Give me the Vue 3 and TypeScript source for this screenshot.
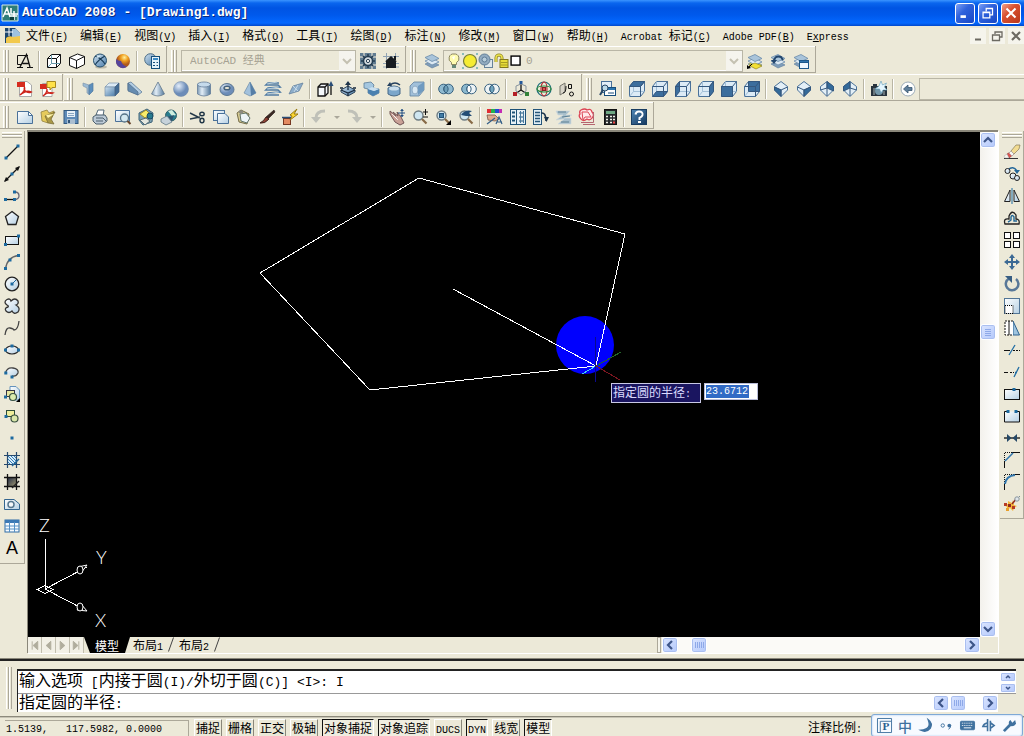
<script setup lang="ts">
import { h, ref } from 'vue'

type Item = { kind: 'icon' | 'sep' | 'drop' | 'workspace' | 'layer' | 'well'; id: string; label: string }

const path = (d: string, fill = 'none', stroke = 'none', w = 1) =>
  `<path d="${d}" fill="${fill}" stroke="${stroke}" stroke-width="${w}"/>`
const line = (d: string, stroke = '#000', w = 1) => path(d, 'none', stroke, w)
const circle = (x: number, y: number, r: number, fill = 'none', stroke = 'none', w = 1) =>
  `<circle cx="${x}" cy="${y}" r="${r}" fill="${fill}" stroke="${stroke}" stroke-width="${w}"/>`
const ellipse = (x: number, y: number, a: number, b: number, fill = 'none', stroke = 'none', w = 1) =>
  `<ellipse cx="${x}" cy="${y}" rx="${a}" ry="${b}" fill="${fill}" stroke="${stroke}" stroke-width="${w}"/>`
const rect = (x: number, y: number, w: number, hh: number, fill = 'none', stroke = 'none') =>
  `<rect x="${x}" y="${y}" width="${w}" height="${hh}" fill="${fill}" stroke="${stroke}"/>`
const dot = (x: number, y: number) => rect(x - 1.5, y - 1.5, 3, 3, '#1c6aa0')

const blue = 'url(#steel)'
const pale = 'url(#pale)'
const navy = '#34587f'
const mid = '#4a7199'

const faces: Record<string, string> = {
  top: 'M.5 5.5L4.500 .5H15.500L11.500 5.500Z',
  bottom: 'M.5 15.500L4.500 10.500H15.500L11.500 15.500Z',
  left: 'M.5 5.5L4.500 .5V10.500L.5 15.500Z',
  right: 'M11.500 5.500L15.500 .5V10.500L11.500 15.500Z',
  front: 'M.5 5.500H11.500V15.500H.5Z',
  back: 'M4.500 .5H15.500V10.500H4.500Z',
}
const cube = (face: string) =>
  path('M.5 5.500L4.500 .5H15.500V10.500L11.500 15.500H.5Z', '#dcebf6', mid) +
  line('M4.500 .5V10.500H15.500M4.500 10.500L.5 15.500', '#a3c0d8') +
  path(faces[face], '#3c6e9d', navy) +
  line('M.5 5.500H11.500L15.500 .5M11.500 5.500V15.500', navy)
const iso = (d: string, y: string) =>
  path('M8 .5L14.500 5.500V9L8 15.500L1.500 9V5.500Z', '#e3eff7', mid) + path(d, '#336a9a', navy) + line(y, navy)

const layers = (c = '#7f9db9') =>
  path('M1 11L8 8L15 12L8 15Z', c, '#5c7c9c', 0.6) +
  path('M1 8L8 5L15 9L8 12Z', '#dce9f3', '#6b8bab', 0.8) +
  path('M1 4.5L8 1.5L15 5.5L8 8.5Z', '#a9c4da', '#6b8bab', 0.8)
const rings = (l: string, m: string, r: string) =>
  circle(5.5, 8, 4.8, l, '#37617f') + circle(10.5, 8, 4.8, r, '#37617f') +
  path('M8 4A4.800 4.800 0 0 1 8 12A4.800 4.800 0 0 1 8 4Z', m, '#37617f')
const shadow = ellipse(9, 14, 6, 1.6, '#bdb9a8')
const magnifier = circle(6.5, 6.5, 4.5, '#cfe6f1', '#6f7d83', 1.4) + line('M10 10L14.5 14.5', '#876a47', 2.2)
const globe = circle(8, 7.5, 6.5, blue, '#27516f')

const icons: Record<string, string> = {
  wire2d: line('M.5 2.5H11M.5 2.5V11.5H4M0 14.5H6M10 14.5H16', '#111') + line('M3 14L9.5 1.5L13 14M5.5 10.5H12', '#111', 1.3),
  wire3d: path('M1.5 5.5L5.5 1.5H14.5V10.5L10.5 14.5H1.5Z', '#fff', '#111') + line('M1.5 5.5H10.5V14.5M10.5 5.5L14.5 1.5', '#111') + line('M5.5 2V10.5H14M5.5 10.5L2 14', '#69a'),
  hidden3d: path('M.5 4.500L8.500 1L15.500 3.500V11.500L7.500 15.500L.5 12.500Z', '#fff', '#111') + line('M.5 4.500L7.500 7.500L15.500 3.500M7.500 7.500V15.500', '#111'),
  realistic: shadow + globe + line('M3 3Q9 5 13 11M13 3Q7 6 3 12', '#163a56', 1.2) + path('M4 4Q6 2 9 2.500L6 5Z', '#d7ecf7'),
  conceptual: circle(8, 8, 7, 'url(#gold)') + path('M1.3 6A7 7 0 0 0 12 13.800Q7 12 6 8Q3 8 1.3 6Z', '#56459b', 'none'),
  manager: circle(6.5, 6.5, 5.8, blue, '#4b6d86') + rect(7.5, 3.500, 8, 12, '#e7f3fa', '#164e7a') + rect(9, 5, 5, 2, '#3c8bc5') + line('M9 9.500H11M12.500 9.500H14M9 12.500H11M12.500 12.500H14', '#164e7a'),
  gear: rect(0, 0, 16, 16, '#617c91') + line('M0 4H3M13 4H16M0 12H3M13 12H16M4 0V3M12 0V3M4 13V16M12 13V16', '#c9ccc6', 1.5) + circle(8, 8, 4.5, '#d5dce0', '#253c50', 1.5) + line('M8 1V4M8 12V15M1 8H4M12 8H15M3 3L5 5M11 11L13 13M13 3L11 5M5 11L3 13', '#253c50', 1.5) + circle(8, 8, 1.600, '#fff', '#253c50'),
  home: line('M0 3.500H16M0 10.500H3M3.500 0V16M12.500 0V5M13 10.500H16M0 14H16', '#8fa2b3') + path('M8 3L14 8.500H13V15H3V8.500H2Z', '#161b21') + rect(11, 3, 2, 4, '#161b21'),
  layers: layers(),
  bulb: path('M8 1A4.500 4.500 0 0 1 10.500 9.500V11.500H5.500V9.500A4.500 4.500 0 0 1 8 1Z', '#fffcb0', '#8a8660') + rect(6, 12, 4, 3, '#687') + path('M6 4L9 3L8 7Z', '#fff'),
  sun: circle(8, 8, 6.5, '#f5ec32', '#747d3c', 1.2) + rect(0, 0, 2, 2, '#8bb') + rect(14, 0, 2, 2, '#8bb') + rect(0, 14, 2, 2, '#8bb') + rect(14, 14, 2, 2, '#8bb'),
  vp: rect(6.5, 6.5, 8, 8, '#dfe8ec', '#67839a') + circle(6.500, 6.500, 5.500, '#92abc0', '#5f7c96') + circle(6.500, 6.500, 2.500, '#b9cedb', '#5f7c96'),
  lock: line('M2 9V5A3 3 0 0 1 8 5V7', '#8c8321', 3) + line('M2 9V5A3 3 0 0 1 8 5V7', '#ece34d', 1.5) + rect(6, 6.500, 8, 8, '#e9dd38', '#83791d') + line('M7 9.500H14M7 12H14', '#a79c23'),
  swatch: rect(1, 1, 13, 13, '#fff', '#000') + rect(2, 2, 11, 11, 'none', '#000'),
  laycur: layers('#e5d33a') + path('M2 12.500L8 10L15 13L9 16Z', '#f2df35', '#867b12', .6) + path('M0 16V12L4 15Z', '#000') + line('M1 15L5 11', '#000'),
  layprev: layers() + line('M4 9Q4 2 11 4L13 7', '#23466d', 2) + path('M1 7H7L4 11Z', '#23466d'),
  laystate: layers() + rect(6.500, 7.500, 9, 8, '#eff8ff', '#1d588a') + rect(6.500, 7.500, 9, 2, '#2f74ad', '#1d588a'),
  pdf: path('M2.500 .5H10L14.500 4V15.500H2.500Z', '#fff', '#aaa') + rect(0, 1, 8, 5, '#d62b1f') + line('M3 14C7 11 8 8 7.500 6.500C6 11 12 12 14 11C10 9 5 12 3 14', '#cd251c', 1.5),
  pdfmail: path('M2.500 2.500H12V15.500H2.500Z', '#fff', '#aaa') + rect(0, 3, 7, 5, '#d62b1f') + path('M7 .5H15.500V6.500H12L10 9V6.500H7Z', '#ffe14a', '#a88a20') + line('M3 15C7 12 7 10 7 8C6 12 11 13 13 12C9 11 5 13 3 15', '#cd251c', 1.3),
  polysolid: path('M2 2L8 4V13L6 12V7L2 5Z', '#9bbbd6', '#8398ad', 0.7) + path('M8 4L12 2V10L8 14Z', '#5d8fbd', '#52789d', 0.7),
  box: path('M1 6L5 2H15L11 6Z', '#dceaf5', '#7894ae', 0.7) + path('M1 6H11V15H1Z', blue, '#7894ae', 0.7) + path('M11 6L15 2V11L11 15Z', '#426b94', '#42607f', 0.7),
  wedge: path('M1 2L4 1L15 11L11 14L1 9Z', '#b4cee4', '#617e9a', 0.8) + path('M1 2L11 11V14L1 10Z', '#668cb0', '#53708e', 0.8),
  cone: path('M8 1L14.500 13Q8 17 1.500 13Z', 'url(#round)', '#63788c', 0.8),
  sphere: circle(8, 8, 7.5, 'url(#ball)', '#6f87a5', 0.5),
  cylinder: path('M1.500 3V13Q8 17 14.500 13V3Z', 'url(#round)', '#647e99', 0.8) + ellipse(8, 3.500, 6.500, 2.500, '#c5daeb', '#647e99', 0.8),
  torus: ellipse(8, 8.500, 7, 6, 'url(#ball)', '#5d7893') + ellipse(8, 7, 3, 1.800, '#ece9d8', '#44617e', 1.500),
  pyramid: path('M8 1L14 12L8 15L2 12Z', '#a2c1dc', '#6d8ba7', 0.7) + path('M8 1L14 12L9 15Z', '#567fa7'),
  helix: line('M14 2H3L1 4H13L15 6L3 7L1 9H13L15 11L3 12L1 14H14', '#507ba3', 1.700) + line('M12 1L2 3M14 6L2 8M14 11L2 13', '#b8cfdf'),
  plane: path('M5 5L15 2L11 10L1 13Z', '#8cadca', '#64829e', 0.8) + line('M5 5L10 10M10 4L6 11', '#c6d9e7'),
  extrude: path('M1 6L4 3H11V12L8 15H1Z', '#f4f7fa', '#111', 1.3) + line('M1 6H8V15M8 6L11 3', '#111', 1.3) + line('M14 14V2', '#111', 1.300) + path('M14 0L16.500 5H11.500Z', '#294d77'),
  presspull: path('M1 9L8 5L15 9V11L8 15L1 11Z', blue, '#2e4356') + line('M8 1V9M1 9L8 12L15 9M8 12V15M0 7H3M13 7H16', '#17293e', 1.3) + path('M8 0L11 4H5Z', '#20364d'),
  sweep: path('M1 2L8 1L11 4L10 7L16 8V12L10 15L5 12V8L1 7Z', '#a5c7e0', '#5c7d9b', 0.8) + path('M5 8L11 10L16 8V12L10 15L5 12Z', '#4b81b0') + path('M5 8L9 6L16 8L11 10Z', '#c9dfef'),
  revolve: path('M2 7Q8 3 14 7V13Q8 17 2 13Z', '#7ba6ca', '#476987') + ellipse(8, 7.500, 5, 2, '#cadeec') + line('M4 4Q9 0 14 4', '#233f5d', 1.500) + path('M1 5L4 1L6 5Z', '#233f5d'),
  loft: path('M1 5L5 1H15V9L10 15H1Z', '#a1c0da', '#6080a0', 0.8) + ellipse(6, 9, 3, 4, '#d8e8f3', '#8fabc4') + path('M9 5L15 1V9L9 14Z', '#6f9ac0'),
  union: rings('#90bad0', '#6e9fb9', '#90bad0'),
  subtract: rings('#8bb8ce', '#fff', '#edf3f5'),
  intersect: rings('#edf3f5', '#6fa4be', '#edf3f5'),
  move3d: line('M8 9V2M8 9L2 13M8 9L14 13', '#111', 1.300) + line('M3 5L8 3L13 5V10M3 5V10L8 14L13 10', '#87939d') + rect(6.500, 0, 3, 3, '#24599b') + rect(0, 11, 4, 4, '#b41e24') + rect(12, 11, 4, 4, '#328038'),
  rotate3d: circle(8, 8, 7, 'none', '#1e6f7a', 1.200) + ellipse(8, 8, 3, 7, 'none', '#ba2834', 1.200) + ellipse(8, 8, 7, 3, 'none', '#2b8840', 1.200) + rect(6.500, 6.500, 3, 3, '#e3524a', '#842127'),
  align3d: path('M1 5L6 2V11L1 14Z', '#d7d4c8', '#77766d') + line('M9.500 3.500H12.500V7.500H9.500ZM4 12Q7 12 7 5', '#111') + circle(12.500, 13, 2, 'none', '#111'),
  named: rect(1.500, .5, 10, 11, '#e3eff8', mid) + rect(4.500, 6.500, 11, 8, '#fff', '#164d7b') + rect(5, 7, 10, 2, '#2c75ad') + circle(5, 7, 3, '#bddbe9', '#294866') + line('M3 9L0 14', '#294866', 2) + line('M8 12H14', '#164d7b'),
  vtop: cube('top'), vbottom: cube('bottom'), vleft: cube('left'), vright: cube('right'), vfront: cube('front'), vback: cube('back'),
  sw: iso('M1.500 6L8 9V15.500L1.500 9Z', 'M1.500 6L8 9L14.500 6M8 9V15'),
  se: iso('M14.500 6L8 9V15.500L14.500 9Z', 'M1.500 6L8 9L14.500 6M8 9V15'),
  ne: iso('M8 .5L14.500 5.500V10L8 7Z', 'M1.500 9L8 7V15M8 7V1'),
  nw: iso('M8 .5L1.500 5.500V10L8 7Z', 'M14.500 9L8 7V15M8 7V1'),
  camera: rect(0, 5, 16, 10, '#29343e') + rect(2, 3, 4, 3, '#29343e') + circle(8, 10, 4, '#7497a9') + path('M10 0L11.500 4L15.500 2L13.500 6L16 9L12 9L10 12L8.500 8L4 8L8 5Z', '#e5f7ff', '#5f9cba', 0.6) + line('M3 7V14M13 10V14', '#a9b5b8'),
  back: circle(8, 8, 7, '#fff', '#9cacb8') + path('M3.500 8L8 4V6.500H12V9.500H8V12Z', '#5f7f9b', '#36546f', 0.8),
  new: path('M.5 2.500H11.500L15.500 6.500V14.500H.5Z', pale, mid) + path('M11.500 2.500V6.500H15.500Z', '#fff', mid),
  open: path('M1 3L7 1L9 4L14 2L12 8L8 14L2 12Z', '#e5ca5b', '#928140', 0.8) + path('M5 7L15 3L11 10L14 15L8 14Z', '#aa9847', '#716631', 0.7) + path('M6 6L14 5L8 9Z', '#fff6ad'),
  save: rect(1, 1.500, 14, 13, '#5e8bb8', '#32597f') + rect(4, 2, 8, 6, '#e8f1f8') + rect(4, 10, 8, 5, '#aabed0') + line('M5 4.500H11M5 6.500H11', '#88a6c2') + rect(5, 11, 2, 3, '#315579'),
  print: path('M4 6L6 1H12L11 7Z', '#fff', '#536979') + path('M1 8L4 6H13L15 9V12L11 15H4L1 12Z', '#bbc9d6', '#4b5e6c') + line('M4 9H11L14 12M4 12H11', '#4b5e6c'),
  preview: path('M.5 1.500H14.500V12.500H.5Z', pale, mid) + circle(9.500, 9, 4, '#d4e8f0', '#567387', 1.3) + line('M12.500 12L15.500 15', '#66452c', 2),
  publish: path('M1 4L9 0L15 4L14 13L5 16L1 11Z', '#7ba1b3', '#3f6479') + path('M2 5L8 1L13 6L7 9Z', '#f9ed6a', '#a08a27') + circle(12, 7, 3, '#287a8e', '#184a65') + path('M2 11L8 9L12 12L7 16Z', '#e6e8df', '#586d78'),
  dwf: circle(10, 6.500, 5.500, '#297c8d', '#356169') + path('M7 2L11 1L15 6L11 7Z', '#d0eee0') + path('M6 8L13 6L11 12L7 13Z', '#2b536f') + path('M0 10L6 7L11 13L5 16L0 13Z', '#c6d2da', '#617887', 0.8),
  cut: line('M0 4L10 9M0 10L10 8', '#263b4b', 1.400) + ellipse(12, 5, 2.200, 1.800, 'none', '#1e3445', 1.4) + ellipse(12, 11.500, 2, 2.200, 'none', '#1e3445', 1.4),
  copy: rect(.5, 1.500, 11, 10, pale, mid) + path('M4.500 4.500H12L15.500 8V14.500H4.500Z', pale, mid),
  paste: path('M1 4L5 1L13 5L11 15L3 13Z', '#d8cc94', '#746c48') + path('M4 5L10 4L14 9L11 14L5 12Z', '#eef5f7', '#60746c') + ellipse(5, 3, 2.5, 1.8, '#8d8b80'),
  match: path('M15 1L16 3L9 10L7 8Z', '#3b2924', '#231917', 0.6) + path('M7 8L10 10Q6 15 1 14Q5 12 7 8Z', '#8e4134', '#3c211c'),
  block: rect(1.500, 9.500, 7, 6, '#e38a61', '#753621') + path('M8 6L15 0L12 5H16L8 11L10 7Z', '#ffd92f', '#977b13') + line('M0 8.500H9', '#2c4e77', 1.500),
  undo: line('M14 2Q5 2 5 9', '#bfc0b8', 3) + path('M0 8H10L5 14Z', '#bfc0b8'),
  redo: line('M1 2Q10 2 10 9', '#bfc0b8', 3) + path('M5 8H15L10 14Z', '#bfc0b8'),
  drop: path('M5 7H11L8 10Z', '#aaa79a'),
  pan: path('M1 2L7 7L4 3L9 7L8 3L12 8L15 14L11 16L6 13L1 5Z', '#c9a197', '#725656') + line('M3 5L8 10M5 7L9 11', '#fff', .7) + line('M13 0V8M9 4H16', '#234f82') + path('M13 0L15 2H11ZM13 8L11 6H15Z', '#234f82'),
  zoomrt: magnifier + line('M11 3H16M13.500 0V6M11 8H16', '#111'),
  zoomwin: magnifier + rect(4.500, 4.500, 4, 4, '#407ba4', '#20537a') + path('M16 11V16H11Z', '#000'),
  zoomprev: magnifier + path('M3 6Q7 0 14 2L11 4L14 7L8 7Z', '#234d76'),
  props: rect(0, 0, 4, 4, '#e12d34') + rect(4, 0, 4, 4, '#21b34c') + rect(8, 0, 4, 4, '#224ed0') + rect(12, 0, 3, 4, '#c42bb4') + path('M0 6L8 6L12 10L8 12L1 11Z', '#dfab8e', '#684838', .7) + line('M0 15L8 9M9 15L12 8L15 15M10 13H15', '#345f88', 1.2),
  dcenter: rect(.5, .5, 15, 15, '#e8f2f7', '#1d5278') + line('M6.500 1V15M9 4H14M9 8H14M9 12H14', '#1d5278') + line('M2 3.500H5M2 7.500H5M2 11.500H5', '#1d5278', 2) + line('M10.500 2V14M13.500 2V14', '#477a9e'),
  palettes: rect(.5, .5, 8, 15, '#e1eef5', '#24557a') + line('M2 3.500H7M2 6.500H7M2 9.500H7M2 12.500H7', '#24557a', 1.5) + line('M8 4Q13 3 13 12', '#19334b', 1.5) + path('M11 8H16L13.500 13Z', '#19334b'),
  sheets: path('M0 2H14L10 6H16L8 9H15V15H2L8 10L0 11L7 6H2Z', '#a9c0cc', '#d0dadd', 0.7) + line('M2 3H10M6 8L14 7M5 13H13', '#5d8094', 1.2),
  markup: path('M2 1Q6-1 8 1Q12-1 13 3Q16 6 13 9Q11 12 8 10Q4 13 2 10Q-1 7 1 5Q0 2 2 1', '#ffeaea', '#dc4554', 1.3) + path('M3 3H9L12 8H6L4 11Z', 'none', '#dc4554') + line('M2 13.500H14.500V3M4 15.500H16', '#b56570'),
  calc: rect(2.500, 0.500, 12, 15, '#24272a', '#111') + rect(4, 2, 9, 3, '#6ea783') + line('M4 7.500H6M8 7.500H10M11 7.500H13M4 10.500H6M8 10.500H10M11 10.500H13M4 13.500H6M8 13.500H10', '#f0f0e8', 1.7) + rect(11, 12.500, 2, 2, '#e44'),
  help: rect(.5, .5, 15, 15, 'url(#help)', '#193d61') + line('M4.500 5.500Q5 2.500 8 2.500Q12 2.500 11.500 6Q11 8 8.500 9V11', '#fff', 2) + rect(7, 12, 3, 2, '#fff'),
  line: line('M2 14L14 2', '#111', 1.2) + dot(2, 14) + dot(14, 2),
  xline: line('M1 15L15 1', '#111', 1.2) + path('M0 16L2 11L5 14ZM16 0L14 5L11 2Z', '#111') + dot(8, 8),
  pline: line('M1 11.500H11', '#111', 1.3) + line('M11 4Q15 4 15 8Q15 11 11 11.500', '#667', 1.3) + dot(1.500, 11.500) + dot(10.500, 4) + dot(10.500, 11.500),
  polygon: path('M8 1.500L14.500 6.500L12 14.500H4L1.500 6.500Z', pale, '#222', 1.3),
  rectangle: rect(1.500, 4.500, 13, 8, pale, '#111') + dot(1.500, 12.500) + dot(14.500, 4),
  arc: line('M1.500 15Q3 3 14.500 1.500', '#666', 1.3) + dot(1.500, 14.500) + dot(6, 6) + dot(14.500, 1.500),
  circle: circle(8, 8, 6.800, pale, '#222', 1.300) + line('M8 8L12 4', '#1c6aa0') + dot(8, 8),
  cloud: path('M3 7Q-1 4 3 1.500Q6 0 7 3Q11-1 14 3Q15 6 12 7Q17 10 14 14Q10 17 8 13Q5 16 2 13Q0 10 4 9Q5 8 3 7Z', pale, '#333', 1.300),
  spline: line('M1 15Q2 7 6 8T10 10Q14 10 15 1', '#444', 1.300),
  ellipse: ellipse(8, 8, 6.500, 4, pale, '#222', 1.200) + dot(8, 4) + dot(1.500, 8) + dot(14.500, 8),
  earc: path('M1.500 9Q3 3 9 4Q15 5 14 9Q12 13 8 12', pale, '#444', 1.300) + dot(1.800, 9) + dot(8, 13),
  insert: path('M6 .5H12L15.500 4V14H6Z', pale, '#6593bd') + rect(2.500, 4.500, 8, 6, '#e6e6a0', '#334') + circle(9, 11, 3.500, '#dcecaf', '#38503f', 1.200) + dot(1.500, 11) + path('M16 12V16H12Z', '#000'),
  mkblock: rect(2.500, 2.500, 8, 6, '#eeee9b', '#2d4d38') + circle(10.500, 10.500, 3.500, '#d9e7aa', '#38503f', 1.200) + dot(2, 8.500),
  point: dot(8, 8),
  hatch: rect(3, 3, 10, 10, '#d9edf9') + line('M0 3.500H16M0 12.500H16M3.500 0V16M12.500 0V16', '#26496d', 1.200) + line('M4 4L12 12M7 4L12 9M4 7L9 12M10 4L12 6M4 10L6 12', '#337eb8') + line('M8 14L15 7', '#1e6497', 1.400),
  gradient: rect(3, 3, 10, 10, 'url(#dark)') + line('M0 3.500H16M0 12.500H16M3.500 0V16M12.500 0V16', '#111', 1.300) + line('M8 14L15 7', '#222', 1.400),
  region: path('M.5 3.500H10L15.500 8V13.500H.5Z', pale, '#33658f') + circle(7, 8.500, 3, '#f6f8fa', '#58788f', 1.500),
  table: rect(1, 2, 14, 12, '#f7fbff', '#2f6ca6') + rect(1, 2, 14, 3, '#3c79b5') + line('M1 8H15M1 11H15M5.500 4V14M10.500 4V14', '#5490c5'),
  erase: line('M0 14.500H14', '#333') + path('M3 10L8 7L10 10L5 14Z', '#e15450', '#8c3530', .6) + path('M7 7L12 1H16L15 5L10 10Z', '#f2dc92', '#756a46', .6) + path('M5 9L7 7L10 10L8 12Z', '#f6f6f2', '#999', .5) + path('M0 12L3 10L5 14H1Z', '#f6f6f2', '#999', .4),
  clone: line('M4 4Q9-1 13 5', '#24679a', 1.500) + path('M10 4H16L13 8Z', '#24679a') + circle(3.500, 5, 2.500, pale, '#222') + circle(9, 10, 3, pale, '#222') + circle(13, 12, 2.500, pale, '#222'),
  mirror: path('M6 2V13.500H.5ZM10 2V13.500H15.500Z', pale, '#222') + line('M8 0V16', '#1d6ca2'),
  offset: path('M1 14Q-1 8 5 9V6Q8-1 12 5V9Q16 9 15 14Z', 'none', '#222', 1.300) + line('M4 12Q6 11 7 10V7Q8 4 10 7V11H13', '#236896', 1.400),
  array: rect(.5, .5, 6, 6, '#fff', '#111') + rect(9.500, .5, 6, 6, '#fff', '#111') + rect(.5, 9.500, 6, 6, '#fff', '#111') + rect(9.500, 9.500, 6, 6, '#fff', '#111'),
  move: line('M8 2V14M2 8H14', '#3b6994', 2) + path('M8 0L11 4H5ZM8 16L5 12H11ZM0 8L4 5V11ZM16 8L12 11V5Z', '#3b6994'),
  rotate: line('M5 2.500A6.300 6.300 0 1 0 12 3', '#587798', 2.500) + path('M1 0H8V7Z', '#385e83'),
  scale: rect(.5, .5, 15, 15, pale, '#527596') + '<rect x="1" y="7.500" width="8" height="8" fill="#fff" stroke="#000" stroke-dasharray="1 1"/>',
  stretch: path('M9 1V15H15.500Z', '#9fc4df', '#2e6390') + '<path d="M9 1H1V15H9" fill="#fff" stroke="#111" stroke-dasharray="2 1"/>' + line('M5 1V15', '#111'),
  trim: line('M0 8.500H6M9 8.500H11M12 8.500H14M15 8.500H16', '#111') + line('M5 13L11 3', '#226ea4', 1.300),
  extend: line('M0 8.500H4M6 8.500H8M9 8.500H10', '#111') + line('M10 13L15 3M11 8.500H13', '#226ea4', 1.300),
  breakpt: rect(.5, 3.500, 15, 10, pale, '#111') + dot(10, 3.500),
  break: path('M3 3.500H.5V14H15.500V3.500H13', pale, '#111') + dot(4, 3.500) + dot(12, 3.500),
  join: line('M0 8H16', '#111', 1.300) + path('M3 4L7.500 8L3 12ZM13 4L8.500 8L13 12Z', '#254866'),
  chamfer: '<path d="M.5 8V.5H8" fill="none" stroke="#111" stroke-dasharray="1 1"/>' + line('M.5 16V9M8 .5H16', '#111') + line('M1 9L9 1', '#3277ac', 1.600),
  fillet: '<path d="M.5 8V.5H8" fill="none" stroke="#111" stroke-dasharray="1 1"/>' + line('M.5 16V9M9 .5H16', '#111') + line('M1 10Q2 2 11 1', '#3277ac', 2),
  explode: path('M4 5L8 7L9 4L10 9L13 10L10 12L9 15L6 12L2 15L3 11L0 9L4 8Z', '#f4b53a') + rect(2, 12, 3, 3, '#e9a02c') + rect(0, 7, 3, 3, '#b63a25') + rect(4, 8, 3, 3, '#922a20') + rect(8, 10, 3, 3, '#b63a25') + line('M8 8L13 2', '#922a20', 1.500) + circle(13, 3, 2.200, '#dfe5e9', '#89959d') + rect(15, 0, 1, 1, '#789'),
}

const tools = (spec: string): Item[] =>
  spec.split(' ').map((id) => {
    if (id === '|') return { kind: 'sep', id, label: '' }
    if (id === 'v') return { kind: 'drop', id: 'drop', label: 'history' }
    if (id === 'workspace' || id === 'layer' || id === 'well') return { kind: id, id, label: id }
    return { kind: 'icon', id, label: id }
  })

const rows = [
  [
    'wire2d | wire3d hidden3d realistic conceptual | manager',
    'workspace gear home',
    'layers layer laycur layprev laystate',
  ],
  [
    'pdf pdfmail',
    'polysolid box wedge cone sphere cylinder torus pyramid helix plane | extrude presspull sweep revolve loft | union subtract intersect | move3d rotate3d align3d',
    'named | vtop vbottom vleft vright vfront vback | sw se ne nw | camera | back well',
  ],
  [
    'new open save | print preview publish dwf | cut copy paste match block | undo v redo v | pan zoomrt zoomwin zoomprev | props dcenter palettes sheets markup calc | help',
  ],
].map((r) => r.map(tools))

const drawTools = 'line xline pline polygon rectangle arc circle cloud spline ellipse earc insert mkblock point hatch gradient region table'.split(' ')
const modifyTools = 'erase clone mirror offset array move rotate scale stretch trim extend breakpt break join chamfer fillet explode'.split(' ')

const menus: [string, string][] = [
  ['文件', 'F'], ['编辑', 'E'], ['视图', 'V'], ['插入', 'I'], ['格式', 'O'], ['工具', 'T'],
  ['绘图', 'D'], ['标注', 'N'], ['修改', 'M'], ['窗口', 'W'], ['帮助', 'H'], ['Acrobat 标记', 'C'], ['Adobe PDF', 'B'],
]
const modes = ref([
  { label: '捕捉', on: false }, { label: '栅格', on: false }, { label: '正交', on: false }, { label: '极轴', on: false },
  { label: '对象捕捉', on: true }, { label: '对象追踪', on: true }, { label: 'DUCS', on: false }, { label: 'DYN', on: true },
  { label: '线宽', on: false }, { label: '模型', on: true },
])
const layouts = ['布局1', '布局2']
const navs = ['M4.500 3V12M10.500 3L5.500 7.500L10.500 12Z', 'M9.500 3L4.500 7.500L9.500 12Z', 'M4.500 3L9.500 7.500L4.500 12Z', 'M3.500 3L8.500 7.500L3.500 12ZM9.500 3V12']
const position = ref('1.5139,   117.5982, 0.0000')
const radius = ref('23.6712')
const command = ref('')

// Half-width runs are set in a smaller monospaced face so two of them fill one ideograph.
const Mixed = (props: { text: string }) =>
  h('span', { class: 'mixed' }, (props.text.match(/[\x20-\x7e]+|[^\x20-\x7e]+/g) ?? []).map((t) => h('span', { class: t.charCodeAt(0) < 127 ? 'half' : 'full' }, t)))
Mixed.props = ['text']
</script>

<template>
  <div class="app">
    <svg class="defs" aria-hidden="true">
      <defs>
        <linearGradient id="steel" x2="1" y2="1"><stop stop-color="#cfe0ee" /><stop offset="1" stop-color="#4a7dab" /></linearGradient>
        <linearGradient id="pale" x2="1" y2="1"><stop stop-color="#fff" /><stop offset="1" stop-color="#b5d0e4" /></linearGradient>
        <linearGradient id="round"><stop stop-color="#7b98b4" /><stop offset=".35" stop-color="#e2edf6" /><stop offset="1" stop-color="#52779a" /></linearGradient>
        <linearGradient id="dark" x2="1" y2="1"><stop stop-color="#1c2744" /><stop offset="1" stop-color="#a89f74" /></linearGradient>
        <linearGradient id="help" x2="1" y2="1"><stop stop-color="#4f86b4" /><stop offset="1" stop-color="#14385f" /></linearGradient>
        <radialGradient id="ball" cx=".35" cy=".3"><stop stop-color="#e4eefa" /><stop offset="1" stop-color="#6c8cb8" /></radialGradient>
        <radialGradient id="gold" cx=".6" cy=".25"><stop stop-color="#fff0a0" /><stop offset=".5" stop-color="#f0a020" /><stop offset="1" stop-color="#b05a1c" /></radialGradient>
      </defs>
    </svg>

    <header class="titlebar">
      <svg class="logo" viewBox="0 0 16 16"><rect width="16" height="16" fill="#2f7d78" /><path d="M0 0H16V16H0Z" fill="none" stroke="#d8ece4" /><path d="M1 12L5 3L8 12M3 9H8M9 3V9H16M12 6V15M8 11H15" fill="none" stroke="#fff" stroke-width="1.500" /><path d="M8 12H12V15H8Z" fill="#0b3c3c" /></svg>
      <h1>AutoCAD 2008 - [Drawing1.dwg]</h1>
      <button class="win" aria-label="minimize"><svg viewBox="0 0 20 20"><path d="M5 14H11" stroke="#fff" stroke-width="3" /></svg></button>
      <button class="win" aria-label="restore"><svg viewBox="0 0 20 20"><path d="M8 8V5H15V12H12M4.500 9H12V15.500H4.500ZM4 9.500H12" fill="none" stroke="#fff" stroke-width="1.400" /></svg></button>
      <button class="win close" aria-label="close"><svg viewBox="0 0 20 20"><path d="M5 5L15 15M15 5L5 15" stroke="#fff" stroke-width="2.300" /></svg></button>
    </header>

    <nav class="menubar">
      <svg class="doc" viewBox="0 0 16 16"><path d="M0 0H10L15 5V15H0Z" fill="#1c456d" /><path d="M7 1H11L15 5V9H7Z" fill="#9ec2df" /><path d="M1 10Q4 7 8 9L15 8V15H1Z" fill="#f2c94c" /><path d="M4 0V8M0 4H8" stroke="#fff" /></svg>
      <button v-for="[name, key] in menus" :key="name" class="menu"><Mixed :text="name" /><span class="half">(<u>{{ key }}</u>)</span></button>
      <button class="menu"><span class="half">E<u>x</u>press</span></button>
      <span class="grow"></span>
      <button class="mdi" aria-label="minimize drawing"><svg viewBox="0 0 16 16"><path d="M5 11.500H11" stroke="#6c6a62" stroke-width="2" /></svg></button>
      <button class="mdi" aria-label="restore drawing"><svg viewBox="0 0 16 16"><path d="M6 6V4H13V9H11M3.500 7H10.500V12.500H3.500ZM6 4H13" fill="none" stroke="#6c6a62" stroke-width="1.300" /></svg></button>
      <button class="mdi" aria-label="close drawing"><svg viewBox="0 0 16 16"><path d="M4 4L12 12M12 4L4 12" stroke="#6c6a62" stroke-width="2.200" /></svg></button>
    </nav>

    <div v-for="(row, r) in rows" :key="r" class="row">
      <div v-for="(bar, b) in row" :key="b" class="bar" :class="{ fill: r === 1 && b === 2 }" role="toolbar">
        <span class="grip"></span>
        <template v-for="(item, i) in bar" :key="i">
          <span v-if="item.kind === 'sep'" class="sep"></span>
          <button v-else-if="item.kind === 'icon'" class="tool" :aria-label="item.label"><svg viewBox="0 0 16 16" v-html="icons[item.id]"></svg></button>
          <button v-else-if="item.kind === 'drop'" class="tool drop" :aria-label="item.label"><svg viewBox="3 0 10 16" v-html="icons.drop"></svg></button>
          <div v-else-if="item.kind === 'workspace'" class="combo workspace">
            <select aria-label="workspace" disabled><option>AutoCAD 经典</option></select>
            <svg class="arrow" viewBox="0 0 16 20"><path d="M4 8L8 12L12 8" fill="none" stroke="#c4c1b2" stroke-width="2" /></svg>
          </div>
          <div v-else-if="item.kind === 'layer'" class="combo layer">
            <svg v-for="n in ['bulb', 'sun', 'vp', 'lock', 'swatch']" :key="n" class="state" :class="n" viewBox="0 0 16 16" v-html="icons[n]"></svg>
            <select aria-label="layer" disabled><option>0</option></select>
            <svg class="arrow" viewBox="0 0 16 20"><path d="M4 8L8 12L12 8" fill="none" stroke="#c4c1b2" stroke-width="2" /></svg>
          </div>
          <span v-else class="well"></span>
        </template>
      </div>
    </div>

    <main class="work">
      <div class="palette left" role="toolbar">
        <span class="hgrip"></span>
        <button v-for="id in drawTools" :key="id" class="vtool" :aria-label="id"><svg viewBox="0 0 16 16" v-html="icons[id]"></svg></button>
        <button class="vtool mtext">A</button>
      </div>
      <section class="drawing">
        <div class="canvas">
          <svg class="scene">
            <circle cx="557" cy="213" r="29" fill="#0000fe" />
            <g fill="none" shape-rendering="crispEdges">
              <path d="M391 46L597 102L568 234L342 258L232 141Z" stroke="#fff" />
              <path d="M425 157L568 234" stroke="#fff" />
              <path d="M568 234L593 220" stroke="#24672a" />
              <path d="M568 234L554 242" stroke="#46d2f0" />
              <path d="M568 234L592 248" stroke="#7c1620" />
              <path d="M567 205V250" stroke="#0a0a8c" />
            </g>
          </svg>
          <svg class="ucs" viewBox="0 0 80 120">
            <g fill="none" stroke="#fff" shape-rendering="crispEdges">
              <path d="M10.500 23V72M2.500 73.500L10 69.500L18 73.500L10 77.500ZM10 73L52 51M10 73L52 95" />
            </g>
            <g fill="#000" stroke="#fff">
              <path d="M43 51L52 49L46 57ZM46 88L52 95L42 94Z" />
              <ellipse cx="45" cy="54" rx="3" ry="4" /><ellipse cx="45" cy="91" rx="3" ry="4" />
            </g>
            <text x="4" y="16">Z</text><text x="61" y="48">Y</text><text x="60" y="111">X</text>
          </svg>
          <form class="dyn" @submit.prevent>
            <label for="radius"><Mixed text="指定圆的半径:" /></label>
            <input id="radius" v-model="radius" type="text" />
          </form>
        </div>
        <div class="vscroll">
          <button class="sb" aria-label="scroll up"><svg viewBox="0 0 14 14"><path d="M3 9L7 5L11 9" /></svg></button>
          <span class="grow"></span>
          <button class="sb thumb" aria-label="scroll position"><svg viewBox="0 0 14 14"><path d="M4 4.500H10M4 6.500H10M4 8.500H10M4 10.500H10" /></svg></button>
          <span class="below"></span>
          <button class="sb" aria-label="scroll down"><svg viewBox="0 0 14 14"><path d="M3 5L7 9L11 5" /></svg></button>
        </div>
        <div class="tabs">
          <button v-for="(d, i) in navs" :key="i" class="nav" aria-label="layout navigation"><svg viewBox="0 0 14 15"><path :d="d" /></svg></button>
          <button class="tab active">模型</button>
          <template v-for="name in layouts" :key="name">
            <button class="tab"><Mixed :text="name" /></button>
            <svg class="slash" viewBox="0 0 6 15"><path d="M.5 14.500L5.500 .5" stroke="#444" fill="none" /></svg>
          </template>
          <span class="grow"></span>
          <span class="splitter"></span>
          <div class="hscroll">
            <button class="sb" aria-label="scroll left"><svg viewBox="0 0 14 14"><path d="M9 3L5 7L9 11" /></svg></button>
            <button class="sb thumb offset" aria-label="scroll position"><svg viewBox="0 0 14 14"><path d="M3.500 4V10M5.500 4V10M7.500 4V10M9.500 4V10M11.500 4V10" /></svg></button>
            <span class="grow"></span>
            <button class="sb" aria-label="scroll right"><svg viewBox="0 0 14 14"><path d="M5 3L9 7L5 11" /></svg></button>
          </div>
        </div>
      </section>
      <div class="palette right" role="toolbar">
        <span class="hgrip"></span>
        <button v-for="id in modifyTools" :key="id" class="vtool" :aria-label="id"><svg viewBox="0 0 16 16" v-html="icons[id]"></svg></button>
      </div>
    </main>

    <section class="command">
      <span class="grip tall"></span>
      <div class="console">
        <div class="history">
          <Mixed text="输入选项 [内接于圆(I)/外切于圆(C)] <I>: I" />
          <div class="mini">
            <button class="sb" aria-label="history up"><svg viewBox="0 0 14 8"><path d="M5 5L7 3L9 5" /></svg></button>
            <button class="sb" aria-label="history down"><svg viewBox="0 0 14 8"><path d="M5 3L7 5L9 3" /></svg></button>
          </div>
        </div>
        <div class="prompt">
          <label for="cmd"><Mixed text="指定圆的半径:" /></label>
          <input id="cmd" v-model="command" type="text" />
          <button class="sb" aria-label="command left"><svg viewBox="0 0 14 14"><path d="M9 3L5 7L9 11" /></svg></button>
          <button class="sb thumb" aria-label="command position"><svg viewBox="0 0 14 14"><path d="M3.500 4V10M5.500 4V10M7.500 4V10M9.500 4V10M11.500 4V10" /></svg></button>
          <span class="track"></span>
          <button class="sb" aria-label="command right"><svg viewBox="0 0 14 14"><path d="M5 3L9 7L5 11" /></svg></button>
          <span class="corner"></span>
        </div>
      </div>
    </section>

    <footer class="status">
      <output class="coords half">{{ position }}</output>
      <button v-for="m in modes" :key="m.label" class="mode" :class="{ on: m.on }" :aria-pressed="m.on" @click="m.on = !m.on"><Mixed :text="m.label" /></button>
      <span class="grow"></span>
      <span class="scale"><Mixed text="注释比例:" /></span>
      <div class="ime">
        <button aria-label="input method"><svg viewBox="0 0 16 16"><path d="M.5 .5H15.500V15.500H.5ZM3.500 3.500H15M3.500 3.500V15" fill="none" stroke="#3f719f" /><text x="9.500" y="13" text-anchor="middle" class="p">P</text></svg></button>
        <button>中</button>
        <button aria-label="width"><svg viewBox="0 0 16 16"><path d="M11 2Q15 12 3 13Q9 16 13 11Q16 6 11 2Z" fill="#3f719f" stroke="#3f719f" stroke-width="1.500" /></svg></button>
        <button aria-label="punctuation"><svg viewBox="0 0 16 16"><circle cx="4" cy="8" r="1.800" fill="none" stroke="#3f719f" /><circle cx="11" cy="8" r="2" fill="#3f719f" /><path d="M12.500 8Q12.500 11 10 12" fill="none" stroke="#3f719f" /></svg></button>
        <button aria-label="keyboard"><svg viewBox="0 0 16 16"><rect x=".5" y="3.500" width="15" height="9" rx="1" fill="#3f719f" stroke="#3f719f" /><path d="M2 5.500H14M2 8H14" stroke="#fff" stroke-dasharray="1 1" /><path d="M4 10.500H12" stroke="#fff" /></svg></button>
        <button aria-label="convert"><svg viewBox="0 0 16 16"><path d="M7 1V14M7 5Q3 6 2 9H7M10 3V14M10 5L14 8L10 11" fill="none" stroke="#3f719f" stroke-width="1.700" /></svg></button>
        <button aria-label="settings"><svg viewBox="0 0 16 16"><path d="M2 14L9 7" stroke="#3f719f" stroke-width="3" /><path d="M14 2L11 5L9 2Q6 4 8 8Q12 10 15 6Z" fill="#3f719f" /></svg></button>
      </div>
    </footer>
  </div>
</template>

<style>
html, body { margin: 0; background: #ece9d8; }
.mixed { white-space: pre; }
.half { font-family: "Liberation Mono", monospace; font-size: 10px; }
.history .half, .prompt .half { font-size: 13px; }
</style>

<style scoped>
.app { display: flex; flex-direction: column; min-height: 100vh; overflow: hidden; box-sizing: border-box; background: #ece9d8; color: #000; font: 12px/16px "Noto Sans CJK SC", sans-serif; }
.defs { position: absolute; width: 0; height: 0; }
button { margin: 0; padding: 0; border: 0; background: none; color: inherit; font: inherit; }
svg { display: block; flex: none; overflow: visible; }
.grow { flex: 1; }

.titlebar { display: flex; align-items: center; gap: 3px; height: 26px; padding: 0 3px 0 2px; box-sizing: border-box; background: linear-gradient(#3b94ff 0, #0a66ee 3px, #0054e3 8px, #0059ec 15px, #0468ff 23px, #0148cb 26px); }
.logo { width: 16px; height: 16px; }
h1 { flex: 1; margin: 0 0 0 1px; color: #fff; font: bold 13px/20px "Liberation Mono", monospace; text-shadow: 1px 1px #0a2a80; }
.win { width: 20px; height: 21px; box-sizing: border-box; border: 1px solid #fff; border-radius: 3px; background: linear-gradient(135deg, #7da0f5, #2f62dc 40%, #1747c5); }
.win svg { width: 18px; height: 18px; }
.close { background: linear-gradient(135deg, #f0a18a, #d9512f 40%, #b8371b); }

.menubar { display: flex; align-items: center; gap: 12px; height: 20px; padding-left: 5px; }
.doc { width: 16px; height: 16px; margin-right: -7px; }
.menu { white-space: nowrap; }
.menubar .grow { min-width: 0; }
.mdi { width: 16px; height: 16px; margin-right: -9px; background: #f5f4ec; }
.mdi:last-child { margin-right: 0; }
.mdi svg { width: 16px; height: 16px; }

.row { display: flex; height: 28px; }
.bar { display: flex; align-items: center; height: 27px; box-sizing: border-box; margin-right: 1px; padding: 3px 3px 0 0; border: solid #aca899; border-width: 0 1px 1px 0; box-shadow: inset 0 1px #fff; }
.fill { flex: 1; margin: 0; padding-right: 0; border-right: 0; }
.grip { flex: none; width: 6px; height: 22px; margin: 0 4px 0 3px; box-sizing: border-box; background: linear-gradient(90deg, #fff 0 1px, #ece9d8 1px 2px, #aca899 2px 3px, #fff 3px 4px, #ece9d8 4px 5px, #aca899 5px 6px); }
.tool { display: grid; place-items: center; flex: none; width: 23px; height: 22px; }
.tool svg { width: 16px; height: 16px; }
.drop { width: 13px; }
.drop svg { width: 10px; }
.sep { flex: none; width: 1px; height: 20px; margin: 0 3px 0 2px; background: #b9b5a4; box-shadow: 1px 0 #fff; }
.combo { display: flex; align-items: center; height: 22px; box-sizing: border-box; border: 1px solid #b9b6a6; box-shadow: inset -1px -1px #fff; }
.workspace { width: 175px; }
.layer { width: 300px; }
.combo select { appearance: none; flex: 1; width: 0; height: 18px; padding: 0 8px; border: 0; background: none; color: #a6a293; opacity: 1; font: 11px/16px "Liberation Mono", "Noto Sans CJK SC", monospace; }
.layer select { padding: 0 4px; }
.arrow { width: 16px; height: 20px; background: #f5f4ee; }
.state { width: 16px; height: 16px; }
.layer .bulb { margin-left: 2px; }
.layer .swatch { width: 12px; height: 12px; }
.well { flex: 1; height: 20px; border: solid #b9b6a6; border-width: 1px 0 1px 1px; }

.work { display: flex; flex: 1; align-items: flex-start; min-height: 0; border-bottom: 1px solid #8a877a; }
.palette { display: flex; flex-direction: column; align-items: center; flex: none; margin-top: 1px; padding-bottom: 4px; border: solid #aca899; border-width: 0 1px 1px 0; box-sizing: border-box; }
.left { width: 25px; }
.right { width: 24px; padding-bottom: 3px; }
.hgrip { width: 20px; height: 6px; margin: 1px 0 3px; background: linear-gradient(#fff 0 1px, #ece9d8 1px 2px, #aca899 2px 3px, #fff 3px 4px, #ece9d8 4px 5px, #aca899 5px 6px); }
.vtool { display: grid; place-items: center; width: 22px; height: 22px; }
.vtool svg { width: 16px; height: 16px; }
.mtext { font: 18px/22px "Liberation Sans", sans-serif; }
.drawing { display: grid; flex: 1; grid-template: 1fr 16px / 1fr 18px; align-self: stretch; min-width: 0; margin: 0 2px 5px; border: solid #8a877a; border-width: 2px 0 0 1px; box-shadow: 1px 1px #fff; }
.canvas { position: relative; overflow: hidden; background: #000; }
.scene { position: absolute; inset: 0; width: 100%; height: 100%; }
.ucs { position: absolute; left: 7px; bottom: 1px; width: 80px; height: 120px; }
.ucs text { fill: #fff; font: 300 18px Lato, sans-serif; }
.dyn { position: absolute; left: 583px; top: 251px; display: flex; gap: 3px; }
.dyn label { width: 86px; padding: 0 1px; border: 1px solid #c9c9e6; background: #1a1560; color: #dcdcff; line-height: 15px; }
.dyn input { width: 50px; height: 15px; padding: 0 1px; border: 1px solid #b8bcd8; background: linear-gradient(#316ac5, #316ac5) 1px 1px / 43px 13px no-repeat #fff; color: #fff; font: 10px/15px "Liberation Mono", monospace; outline: 0; }
.vscroll { display: flex; flex-direction: column; padding-right: 2px; background: linear-gradient(90deg, #f3f1ec, #fff); }
.vscroll .grow { flex: 5; }
.below { flex: 8; }
.sb { display: grid; place-items: center; flex: none; width: 16px; height: 16px; box-sizing: border-box; border: 1px solid #fff; border-radius: 3px; background: linear-gradient(135deg, #dce6ff, #b3c8fb); box-shadow: inset 0 0 0 1px #aabff0; }
.sb path { fill: none; stroke: #3d5589; stroke-width: 2.200; }
.sb svg { width: 14px; height: 14px; }
.thumb path { stroke: #8ea9e8; stroke-width: 1; }
.tabs { display: flex; grid-column: 1 / 3; align-items: stretch; min-width: 0; padding-right: 18px; }
.nav { width: 14px; box-sizing: border-box; border-right: 1px solid #c0bdad; background: #f2f0e6; }
.nav svg { width: 13px; height: 15px; }
.nav path { fill: #b0ad9d; stroke: #b0ad9d; }
.tab { width: 40px; line-height: 15px; }
.active { width: 46px; margin-right: -2px; background: #000; color: #fff; clip-path: polygon(0 0, 100% 0, 41px 100%, 6px 100%); }
.slash { width: 6px; height: 15px; }
.splitter { width: 4px; margin-right: 1px; border: 1px solid #aca899; background: #f5f4ea; box-sizing: border-box; }
.hscroll { display: flex; width: 318px; background: #fbfaf7; }
.offset { margin-left: 13px; }

.command { display: flex; border-top: 2px solid #222; padding: 8px 8px 4px 3px; }
.tall { height: 42px; margin: -2px 5px 0 3px; }
.console { flex: 1; min-width: 0; border: solid #222; border-width: 2px 0 0 1px; font-size: 16px; }
.history { display: flex; justify-content: space-between; height: 22px; padding-left: 1px; border-bottom: 1px solid #999; background: #fff; line-height: 16px; }
.mini { display: grid; width: 16px; padding-top: 1px; }
.mini .sb { height: 10px; border-radius: 2px; }
.mini svg { height: 8px; }
.mini path { stroke-width: 1.500; }
.prompt { display: flex; align-items: center; height: 18px; padding-left: 1px; background: #fff; line-height: 18px; }
.prompt input { flex: 1; min-width: 0; height: 16px; padding: 0; border: 0; background: none; outline: 0; font: 13px/16px "Liberation Mono", monospace; }
.prompt .thumb { margin-left: 1px; }
.track { width: 16px; }
.corner { align-self: stretch; width: 18px; background: #ece9d8; }

.status { position: relative; display: flex; align-items: center; gap: 4px; height: 20px; border-top: 1px solid #8d8a7c; box-sizing: border-box; box-shadow: inset 0 1px #c7c4b5; padding-top: 3px; }
.coords { width: 184px; height: 17px; box-sizing: border-box; margin-left: 5px; padding: 1px; border: solid #aca899; border-width: 1px 1px 0 0; white-space: pre; }
.mode { flex: none; height: 18px; padding: 0 1px; border: 1px solid; border-color: #fff #8a877a #ece9d8 #fff; line-height: 16px; }
.coords + .mode { margin-left: 1px; }
.on { border-color: #111 #fff #ece9d8 #111; background: #f0ede0; }
.scale { margin-right: 162px; }
.ime { position: absolute; right: 1px; top: -3px; display: flex; align-items: center; justify-content: space-around; width: 152px; height: 23px; padding: 0 2px; box-sizing: border-box; border: 1px solid #7fa9d6; border-radius: 3px; background: #f7faff; box-shadow: inset 0 0 2px #9cc0ea; color: #3f719f; font-size: 14px; font-weight: 500; }
.ime svg { width: 15px; height: 15px; }
.p { fill: #2d5f90; font: bold 12px "Liberation Serif", serif; }
</style>
